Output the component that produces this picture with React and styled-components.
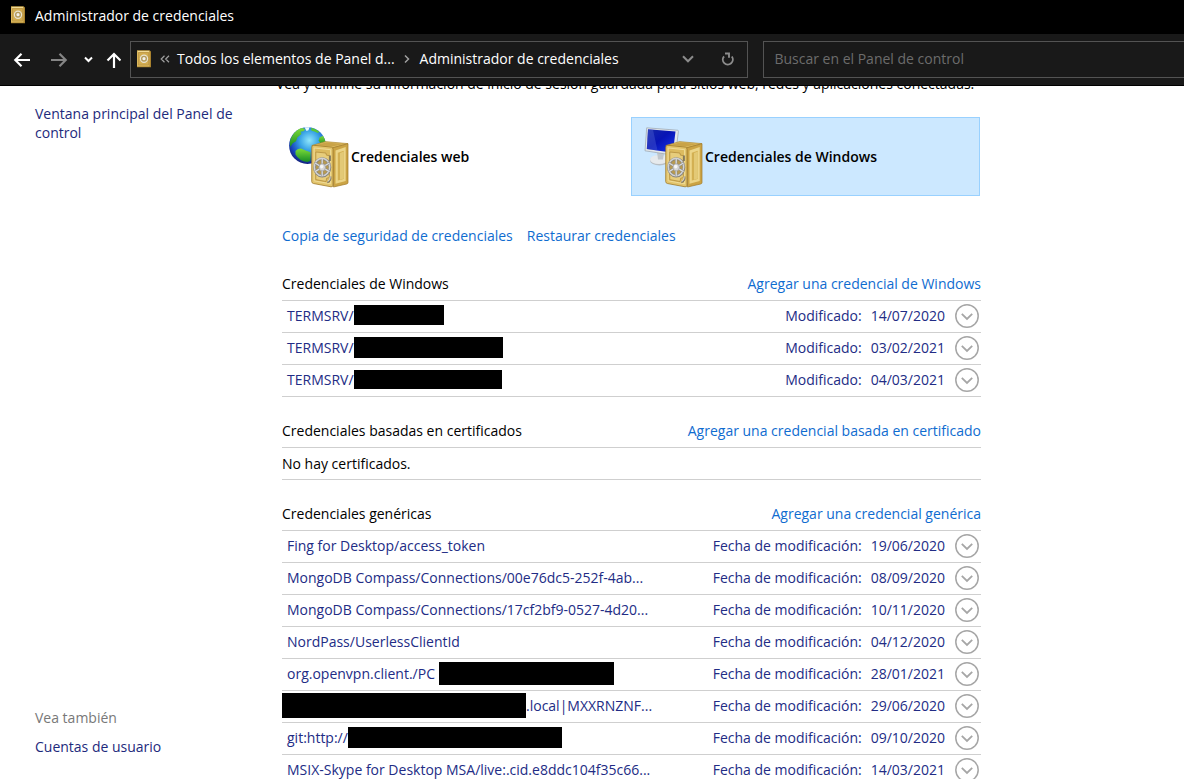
import React from "react";
import styled, { createGlobalStyle, css } from "styled-components";

const GlobalStyle = createGlobalStyle`
  *, *::before, *::after { box-sizing: border-box; }
  body {
    margin: 0;
    background: #fff;
    color: #000;
    font: 14px/19px "Open Sans", "Noto Sans", sans-serif;
  }
  h1, h2, p, ul { margin: 0; padding: 0; font: inherit; }
  ul { list-style: none; }
  a { text-decoration: none; }
  button, input { font: inherit; }
`;

const Window = styled.div`
  display: flex;
  flex-direction: column;
  height: 100vh;
  overflow: hidden;
`;

const TitleBar = styled.header`
  display: flex;
  flex: none;
  align-items: center;
  gap: 9px;
  height: 34px;
  padding: 0 10px 4px;
  background: #000;
  color: #fff;
`;

const NavBar = styled.nav`
  display: flex;
  flex: none;
  align-items: center;
  height: 52px;
  padding-left: 10px;
  background: #191919;
  border-bottom: 1px solid #000;
`;

const NavButton = styled.button`
  display: flex;
  flex: none;
  align-items: center;
  justify-content: center;
  width: ${(p) => p.$width}px;
  height: 36px;
  padding: 0;
  border: 0;
  background: none;
  color: ${(p) => p.$color || "#fff"};
`;

const Fields = styled.div`
  display: grid;
  flex: 1;
  grid-template-columns: 25fr 17fr;
  gap: 15px;
  min-width: 0;
`;

const AddressBar = styled.div`
  display: flex;
  align-items: center;
  min-width: 0;
  height: 37px;
  padding: 0 0 2px 5px;
  border: 1px solid #535353;
  color: #fff;
  white-space: nowrap;
`;

const Crumb = styled.a`
  color: #fff;
`;

const Separator = styled.span`
  display: flex;
  justify-content: center;
  width: 25px;
  color: #a0a0a0;
`;

const Spacer = styled.span`
  flex: 1;
`;

const SearchBox = styled.input`
  width: 100%;
  min-width: 0;
  height: 37px;
  padding: 0 10px 2px;
  border: 1px solid #535353;
  border-right: 0;
  border-radius: 0;
  outline: 0;
  background: #191919;
  color: #fff;
  &::placeholder { color: #6c6c6c; opacity: 1; }
`;

const Pane = styled.div`
  display: flex;
  flex: 1;
  min-height: 0;
  overflow: hidden;
`;

const Sidebar = styled.aside`
  display: flex;
  flex: none;
  flex-direction: column;
  justify-content: space-between;
  width: 276px;
  padding: 18px 36px 23px 35px;
`;

const SideLink = styled.a`
  color: #1d2a7c;
`;

const SeeAlso = styled.div`
  display: flex;
  flex-direction: column;
  gap: 10px;
  color: #787878;
`;

/* The page is scrolled a little, so its first line slides under the bar. */
const Main = styled.main`
  flex: 0 1 705px;
  min-width: 0;
  margin-top: -12px;
`;

const Intro = styled.h1`
  white-space: nowrap;
`;

const Tiles = styled.div`
  display: grid;
  grid-template-columns: 1fr 1fr;
  gap: 5px;
  margin: 24px 1px 30px;
`;

const Tile = styled.button`
  display: flex;
  align-items: center;
  gap: 2px;
  height: 79px;
  padding: 0 9px;
  border: 1px solid ${(p) => (p.$selected ? "#99d1ff" : "transparent")};
  background: ${(p) => (p.$selected ? "#cce8ff" : "transparent")};
  color: #000;
  font-weight: 600;
  text-align: left;
`;

const Sections = styled.div`
  display: flex;
  flex-direction: column;
  gap: 24px;
  padding-left: 6px;
`;

const Actions = styled.div`
  display: flex;
  gap: 14px;
  margin-bottom: 5px;
`;

const Link = styled.a`
  color: #0f6cd0;
`;

const SectionHead = styled.div`
  display: flex;
  justify-content: space-between;
  padding-bottom: 7px;
  border-bottom: 1px solid #cfcfcf;
`;

const rowBox = css`
  display: flex;
  align-items: center;
  width: 100%;
  height: 32px;
  border: 0;
  border-bottom: 1px solid #cfcfcf;
`;

const EmptyRow = styled.p`
  ${rowBox}
`;

const RowButton = styled.button`
  ${rowBox}
  padding: 0 2px 1px ${(p) => (p.$flush ? 0 : 5)}px;
  background: none;
  color: #222c85;
  text-align: left;
  white-space: nowrap;
`;

const Name = styled.span`
  display: flex;
  flex: 1;
  align-items: center;
  align-self: flex-start;
  min-width: 0;
  height: 28px;
`;

const Redaction = styled.span`
  flex: none;
  width: ${(p) => p.$w}px;
  height: ${(p) => p.$h}px;
  background: #000;
`;

const Modified = styled.span`
  display: flex;
  gap: 9px;
  align-items: center;
  align-self: flex-start;
  height: 28px;
  margin-right: 10px;
`;

const svgProps = { fill: "none", stroke: "currentColor", "aria-hidden": true };

const ExpandIcon = () => (
  <svg width="24" height="24" viewBox="0 0 24 24" {...svgProps} stroke="#a6a6a6">
    <circle cx="12" cy="12" r="11.2" strokeWidth="1.5" />
    <path d="M6.8 9.8 12 15l5.2-5.2" strokeWidth="1.8" />
  </svg>
);

const SmallSafe = () => (
  <svg width="16" height="18" viewBox="0 0 16 18" aria-hidden="true">
    <path d="M1 .5h12.800l1.200 1v15.800H1z" fill="#a9822e" />
    <path d="M1 .5h12.500v16H1z" fill="#dbb85c" />
    <path d="M2.500 2.500h10v12.500h-10z" fill="#d2ac50" stroke="#b99243" strokeWidth=".7" />
    <circle cx="8" cy="8.700" r="3.600" fill="#b39a5a" stroke="#e9e4d2" strokeWidth="1.200" />
    <circle cx="8" cy="8.700" r="1.600" fill="#f3f1ea" />
    <path d="M2 1.500h11" stroke="#f0da96" />
  </svg>
);

const BigSafe = () => (
  <g>
    <path d="M24.800 19.500 38.500 15.600l22.500 2L46 22z" fill="#dcbb62" stroke="#a8832f" strokeWidth=".6" />
    <path d="M29 19 39.300 16.500l17 1.500-11 2.600z" fill="#c9a347" />
    <path d="M45.500 21.800 61 17.700v38.800q0 1.200-1.300 1.500L46.500 61z" fill="#cba445" stroke="#a07a28" strokeWidth=".7" />
    <path d="M48.500 24.500 58.700 21v34L48.500 57.800z" fill="#ecd588" />
    <path d="M50.800 26.800 56.800 24.700v28.200l-6 1.700z" fill="#d3b052" />
    <path d="M53 27l3.800-1.400v27L53 53.700z" fill="#e3c976" />
    <path d="M24.800 21q0-1.800 2-1.700l17.500 1.800q1.700.2 1.700 2v36q0 2-2 1.700l-17.600-3.300q-1.700-.3-1.700-2z" fill="#e2c46c" stroke="#a07a28" strokeWidth=".8" />
    <path d="M27.200 22l16.400 1.700v34.100L27.200 54.800z" fill="#dcbb60" stroke="#f3e2a4" strokeWidth=".8" />
    <path d="M28.800 26l10 1 .7 2.200 2.800.4v22l-2.600.6-.7 3.300-10.200-1.900z" fill="#e7cd7c" stroke="#ad8736" strokeWidth=".7" />
    <path d="M43 29.500v5.500M43.500 50.500q.8 4.500-3.200 6" stroke="#77705e" strokeWidth="1.600" fill="none" />
    <path d="M43.200 50.500q.5 3.800-2.600 5.200" stroke="#e8e8e8" strokeWidth=".9" fill="none" />
    <ellipse cx="35.200" cy="41.300" rx="7.700" ry="8.700" fill="#b79a50" stroke="#84827c" strokeWidth="2.800" />
    <ellipse cx="35" cy="41.100" rx="7.700" ry="8.700" fill="none" stroke="#d2d2d2" strokeWidth="1.600" />
    <path d="M35.200 33v17M28 37l14.400 8.600M28 45.600 42.400 37" stroke="#8a8a88" strokeWidth="2.300" />
    <path d="M35.200 33v17M28 37l14.400 8.600M28 45.600 42.400 37" stroke="#dcdcdc" strokeWidth="1.300" />
    <ellipse cx="35.200" cy="41.300" rx="3.300" ry="3.600" fill="#d6d6d6" stroke="#999" strokeWidth=".6" />
    <ellipse cx="34.700" cy="40.600" rx="1.700" ry="1.800" fill="#f6f6f6" />
  </g>
);

const GlobeSafe = () => (
  <svg width="62" height="62" viewBox="0 0 62 62" aria-hidden="true">
    <defs>
      <radialGradient id="sea" cx=".55" cy=".36" r=".64">
        <stop offset="0" stopColor="#8fe6fb" />
        <stop offset=".4" stopColor="#3ba5e6" />
        <stop offset=".8" stopColor="#1745bd" />
        <stop offset="1" stopColor="#14237f" />
      </radialGradient>
      <linearGradient id="land" x1="0" y1="0" x2="0" y2="1">
        <stop offset="0" stopColor="#7ddc38" />
        <stop offset="1" stopColor="#168b25" />
      </linearGradient>
    </defs>
    <circle cx="20.5" cy="19.6" r="18.4" fill="url(#sea)" />
    <path d="M5.500 9.500Q9 3.500 15 2l3 1-1 2-3.500.8 1 2.200-4 3.200-1.500 4-3.500 2.300L3.500 21Q1.500 15 5.500 9.500z" fill="url(#land)" />
    <path d="M24 1.800q5 .8 8.500 4.200l-2 1-3-1.500-3-.7z" fill="#58c638" />
    <path d="M32.500 11.500l3.500-1.800q2.500 4 2.700 8.300l-2.200 1-3-1.500-1.800-3z" fill="url(#land)" />
    <path d="M8.500 25q2-2.800 5.500-2.500l4 1.800 5.500 2v8.500l-3 1.200Q12 35 8.500 28.500z" fill="url(#land)" />
    <path d="M17.500 1.300h5l-1 3-2 .8z" fill="#e9fbff" />
    <BigSafe />
  </svg>
);

const MonitorSafe = () => (
  <svg width="62" height="62" viewBox="0 0 62 62" aria-hidden="true">
    <defs>
      <linearGradient id="screen" x1="0" y1="0" x2="1" y2="1">
        <stop offset="0" stopColor="#1729a8" />
        <stop offset=".45" stopColor="#0714b5" />
        <stop offset="1" stopColor="#1735ee" />
      </linearGradient>
    </defs>
    <ellipse cx="18.500" cy="34.500" rx="9.500" ry="5" fill="#b8bfc5" />
    <ellipse cx="18" cy="33.500" rx="9" ry="4.500" fill="#e6eaed" />
    <path d="M16 26l7 1.500-1 6h-5z" fill="#c0c7cd" />
    <path d="M5.700 1.800l30.800 2.400q1 .1.900 1.200L34.500 29.500 4 24.800z" fill="#e3e7ea" stroke="#9aa4ad" strokeWidth=".7" />
    <path d="M7 3.300l27.500 2.300-2.700 21.200L5.800 22.900z" fill="url(#screen)" />
    <path d="M7 3.300l5 .4 4.500 20.800L5.800 22.900z" fill="#5a6ddb" opacity=".35" />
    <BigSafe />
  </svg>
);

const Arrow = ({ d }) => (
  <svg width="18" height="18" viewBox="0 0 18 18" {...svgProps} strokeWidth="2.2">
    <path d={d} />
  </svg>
);

const windowsCredentials = [
  { before: "TERMSRV/", bar: [90, 20], date: "14/07/2020" },
  { before: "TERMSRV/", bar: [149, 21], date: "03/02/2021" },
  { before: "TERMSRV/", bar: [148, 19], date: "04/03/2021" },
];

const genericCredentials = [
  { before: "Fing for Desktop/access_token", date: "19/06/2020" },
  { before: "MongoDB Compass/Connections/00e76dc5-252f-4ab...", date: "08/09/2020" },
  { before: "MongoDB Compass/Connections/17cf2bf9-0527-4d20...", date: "10/11/2020" },
  { before: "NordPass/UserlessClientId", date: "04/12/2020" },
  { before: "org.openvpn.client./PC\u00a0", bar: [175, 23], date: "28/01/2021" },
  { bar: [244, 25], after: ".local|MXXRNZNF...", date: "29/06/2020" },
  { before: "git:http://", bar: [214, 21], date: "09/10/2020" },
  { before: "MSIX-Skype for Desktop MSA/live:.cid.e8ddc104f35c66...", date: "14/03/2021" },
];

function CredentialList({ items, label }) {
  return (
    <ul>
      {items.map((item) => (
        <li key={item.date}>
          <RowButton type="button" aria-expanded="false" $flush={!item.before}>
            <Name>
              {item.before && <span>{item.before}</span>}
              {item.bar && <Redaction $w={item.bar[0]} $h={item.bar[1]} />}
              {item.after && <span>{item.after}</span>}
            </Name>
            <Modified>
              <span>{label}</span>
              <span>{item.date}</span>
            </Modified>
            <ExpandIcon />
          </RowButton>
        </li>
      ))}
    </ul>
  );
}

function Section({ title, action, children }) {
  return (
    <section>
      <SectionHead>
        <h2>{title}</h2>
        <Link href="#agregar">{action}</Link>
      </SectionHead>
      {children}
    </section>
  );
}

export default function App() {
  return (
    <Window>
      <GlobalStyle />
      <TitleBar>
        <SmallSafe />
        <span>Administrador de credenciales</span>
      </TitleBar>
      <NavBar>
        <NavButton type="button" aria-label="Atrás" $width={24}>
          <Arrow d="M17 9H2.500M8.500 2.800 2.300 9l6.200 6.200" />
        </NavButton>
        <NavButton type="button" aria-label="Adelante" $width={50} $color="#858585">
          <Arrow d="M1 9h14.500M9.500 2.800 15.700 9l-6.200 6.200" />
        </NavButton>
        <NavButton type="button" aria-label="Ubicaciones recientes" $width={9}>
          <svg width="9" height="8" viewBox="0 0 9 8" {...svgProps} strokeWidth="2">
            <path d="M1 1.500 4.500 5 8 1.500" />
          </svg>
        </NavButton>
        <NavButton type="button" aria-label="Subir" $width={37}>
          <Arrow d="M11 17V3M4.500 9.500 11 3l6.500 6.500" />
        </NavButton>
        <Fields>
          <AddressBar>
            <SmallSafe />
            <Separator>
              <svg width="10" height="8" viewBox="0 0 10 8" {...svgProps} strokeWidth="1.200">
                <path d="M4.500 .8 1.200 4l3.300 3.200M9 .8 5.700 4 9 7.200" />
              </svg>
            </Separator>
            <Crumb href="#panel">Todos los elementos de Panel d...</Crumb>
            <Separator>
              <svg width="6" height="10" viewBox="0 0 6 10" {...svgProps} strokeWidth="1.500">
                <path d="M1 1.500 4.500 5 1 8.500" />
              </svg>
            </Separator>
            <Crumb href="#credenciales">Administrador de credenciales</Crumb>
            <Spacer />
            <NavButton type="button" aria-label="Historial" $width={40} $color="#8c8c8c">
              <svg width="12" height="8" viewBox="0 0 12 8" {...svgProps} strokeWidth="2">
                <path d="M1 1.200 6 6.300l5-5.100" />
              </svg>
            </NavButton>
            <NavButton type="button" aria-label="Actualizar" $width={39} $color="#8c8c8c">
              <svg width="14" height="14" viewBox="0 0 14 14" {...svgProps} strokeWidth="1.900">
                <path d="M3 4.300A5 5 0 1 0 10.800 4.500M4 1.500h4v4.200" />
              </svg>
            </NavButton>
          </AddressBar>
          <SearchBox
            type="search"
            aria-label="Buscar en el Panel de control"
            placeholder="Buscar en el Panel de control"
          />
        </Fields>
      </NavBar>
      <Pane>
        <Sidebar>
          <SideLink href="#inicio">Ventana principal del Panel de control</SideLink>
          <SeeAlso>
            <span>Vea también</span>
            <SideLink href="#cuentas">Cuentas de usuario</SideLink>
          </SeeAlso>
        </Sidebar>
        <Main>
          <Intro>
            Vea y elimine su información de inicio de sesión guardada para sitios web, redes y aplicaciones conectadas.
          </Intro>
          <Tiles>
            <Tile type="button">
              <GlobeSafe />
              Credenciales web
            </Tile>
            <Tile type="button" $selected>
              <MonitorSafe />
              Credenciales de Windows
            </Tile>
          </Tiles>
          <Sections>
            <Actions>
              <Link href="#copia">Copia de seguridad de credenciales</Link>
              <Link href="#restaurar">Restaurar credenciales</Link>
            </Actions>
            <Section title="Credenciales de Windows" action="Agregar una credencial de Windows">
              <CredentialList items={windowsCredentials} label="Modificado:" />
            </Section>
            <Section title="Credenciales basadas en certificados" action="Agregar una credencial basada en certificado">
              <EmptyRow>No hay certificados.</EmptyRow>
            </Section>
            <Section title="Credenciales genéricas" action="Agregar una credencial genérica">
              <CredentialList items={genericCredentials} label="Fecha de modificación:" />
            </Section>
          </Sections>
        </Main>
      </Pane>
    </Window>
  );
}
